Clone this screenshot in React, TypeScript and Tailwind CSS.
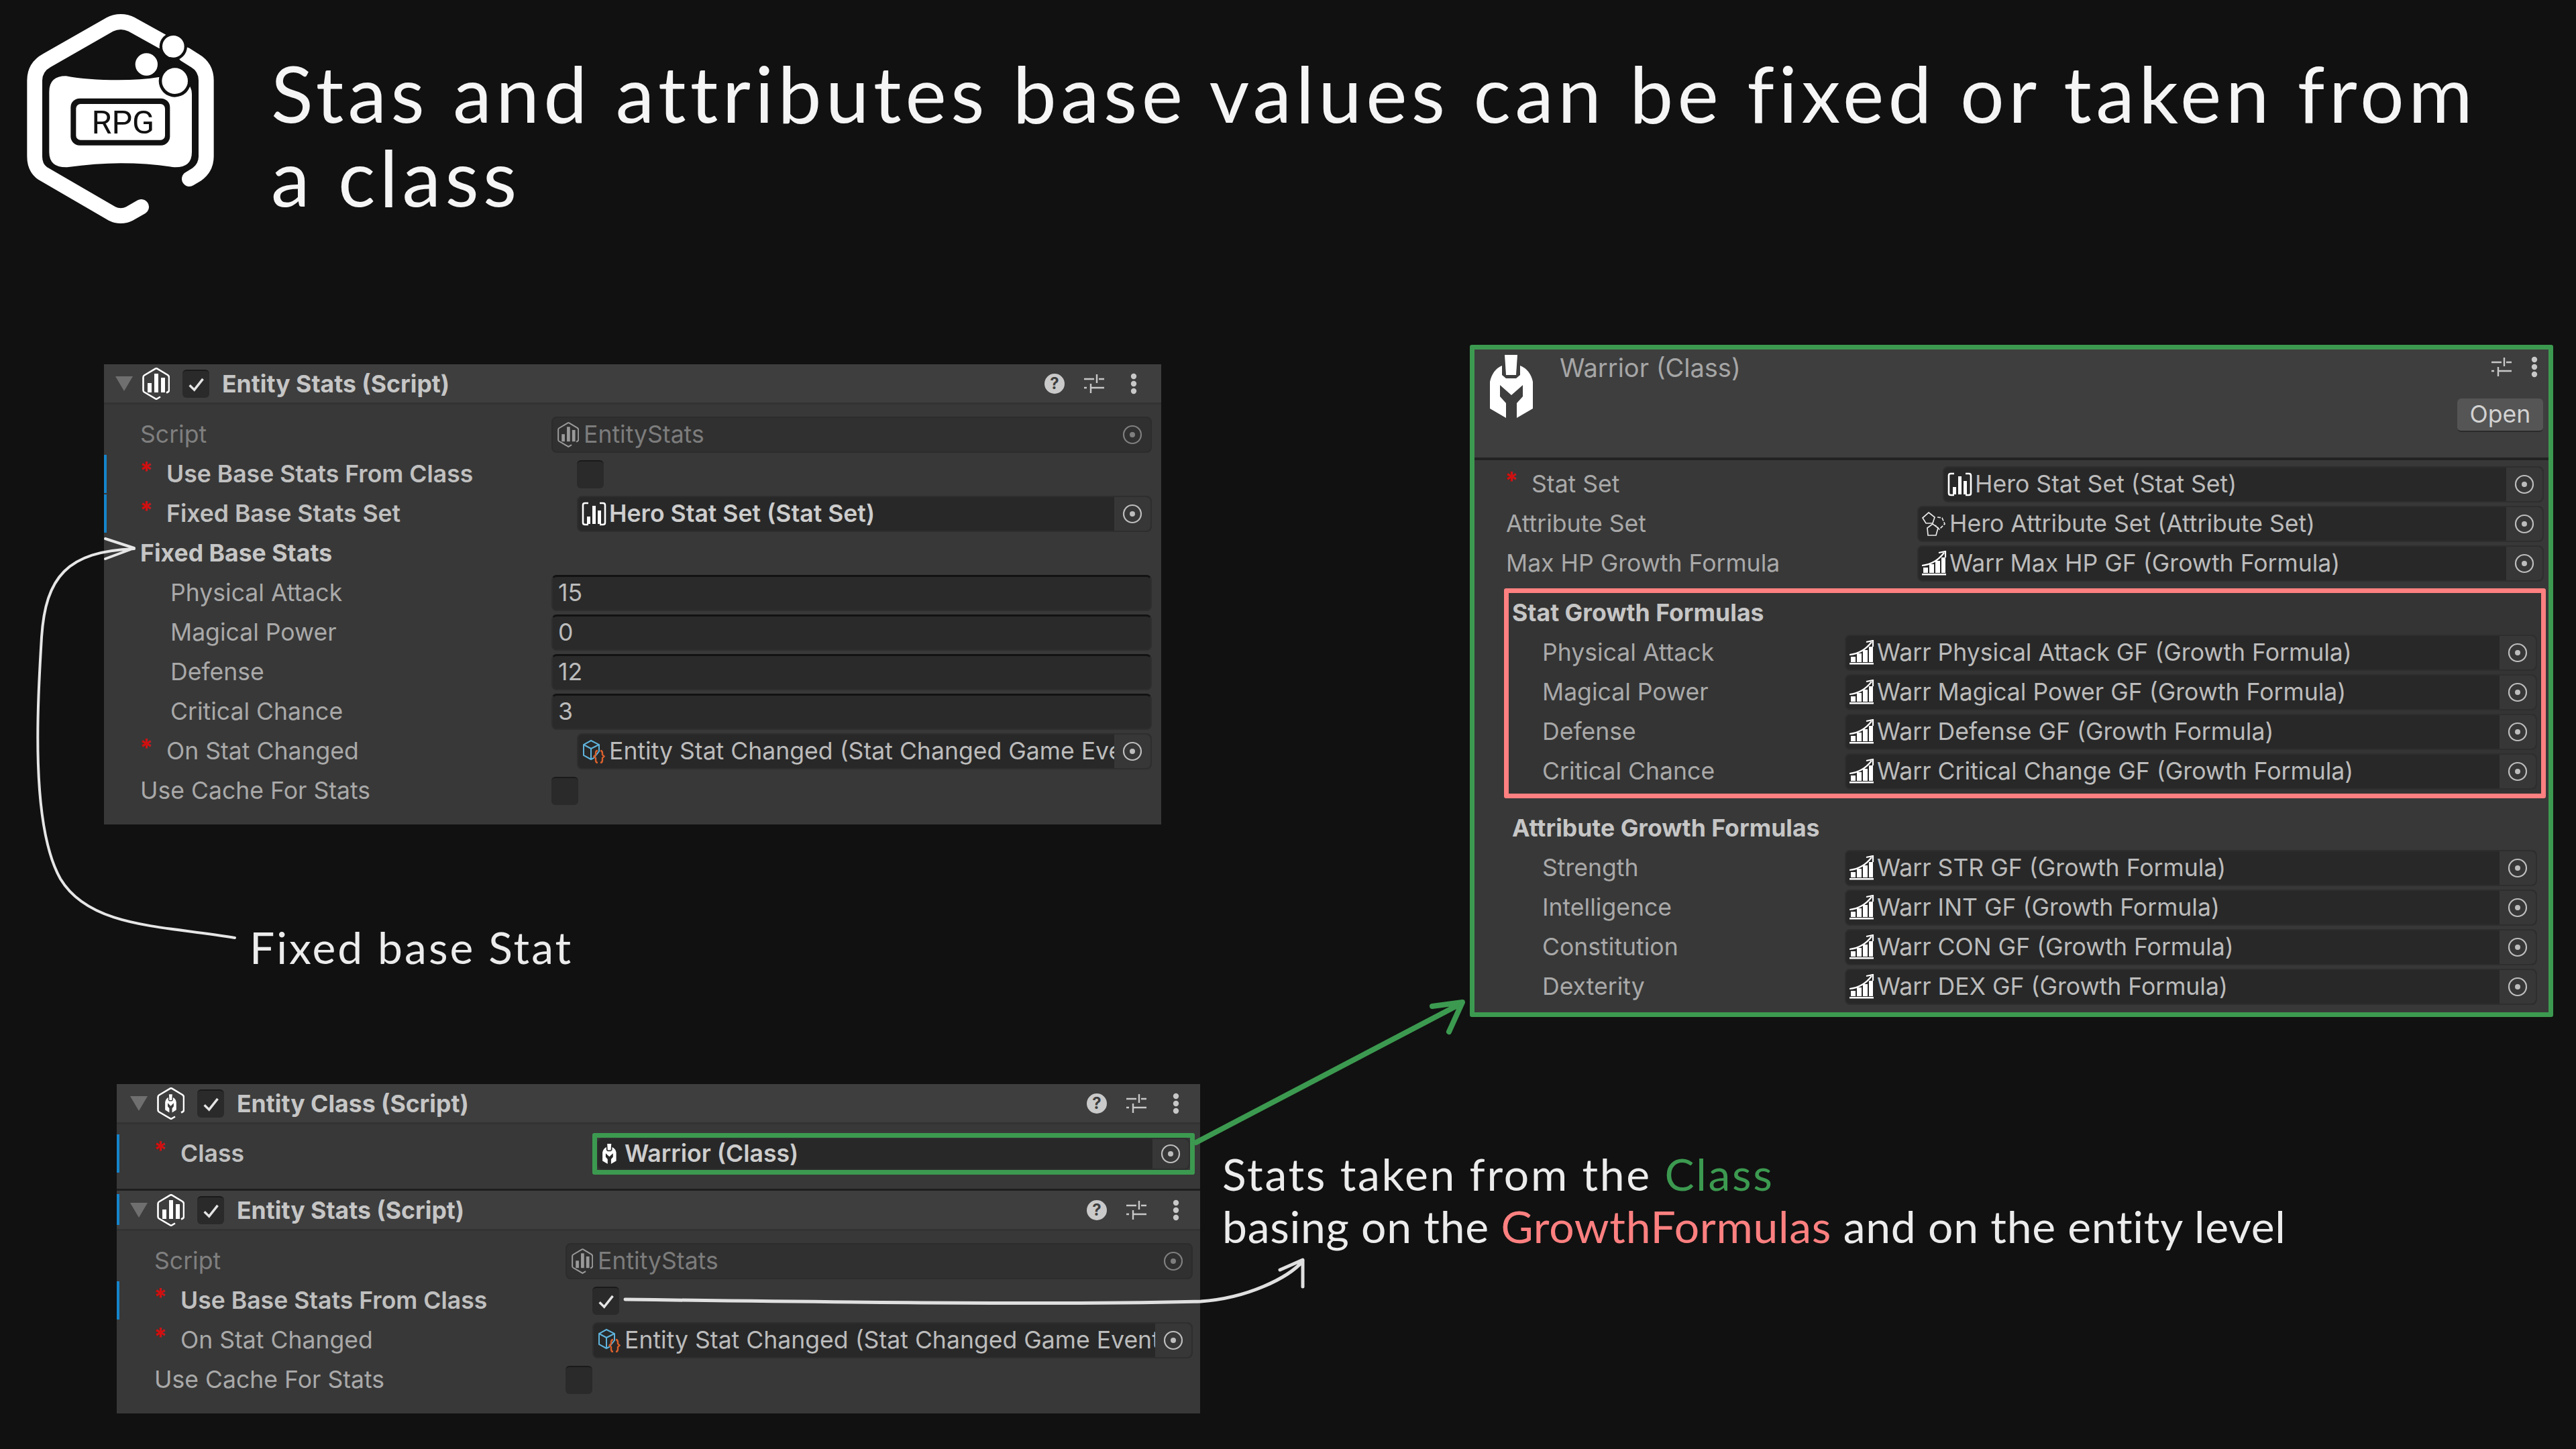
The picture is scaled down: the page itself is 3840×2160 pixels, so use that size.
import React from "react";

const HEX = "M27 43.5 L21 47 L3 36.5 Q1.5 35.5 1.5 33.5 V14.5 Q1.5 12.5 3 11.5 L20 1.5 Q21 1 22 1.5 L38 11 Q40 12.5 40 14.5 V33.5 Q40 35.5 38 36.5 L36 37.5";
const HELMET_BODY = "M34 24V38L40 43H55L61 38V24Q76 30 80 48V88L56 102V80L65 70V53L48 68L31 53V70L40 80V102L16 88V48Q20 30 34 24Z";
const HELMET_PLUME = "M38 8H57L55 38H40Z";

function Helmet({ className }: { className: string }) {
  return (
    <svg viewBox="0 0 100 110" className={className} fill="#fff">
      <path d={HELMET_PLUME} />
      <path d={HELMET_BODY} />
    </svg>
  );
}

function HexStats({ color = "#fff", className = "w-[41px] h-[48px]" }: { color?: string; className?: string }) {
  return (
    <svg viewBox="0 0 41 48" className={className + " shrink-0"} fill={color}>
      <path d={HEX} fill="none" stroke={color} strokeWidth="2.6" />
      <rect x="8" y="23" width="6" height="14" />
      <rect x="18" y="9" width="6" height="28" />
      <rect x="28" y="15" width="6" height="22" />
    </svg>
  );
}

function HexClass() {
  return (
    <svg viewBox="0 0 41 48" className="w-[41px] h-[48px] shrink-0" fill="#fff">
      <path d={HEX} fill="none" stroke="#fff" strokeWidth="2.6" />
      <g transform="translate(8 8) scale(0.26 0.29)">
        <path d={HELMET_PLUME} />
        <path d={HELMET_BODY} />
      </g>
    </svg>
  );
}

function StatSetIcon() {
  return (
    <svg viewBox="0 0 37 36" className="w-[37px] h-[36px] shrink-0" fill="#fff">
      <path d="M10 2H5Q2 2 2 5V31Q2 34 5 34H10M27 2H32Q35 2 35 5V31Q35 34 32 34H27" fill="none" stroke="#fff" strokeWidth="2.6" />
      <rect x="8" y="22" width="5" height="11" />
      <rect x="16" y="6" width="5" height="27" />
      <rect x="24" y="13" width="5" height="20" />
    </svg>
  );
}

function AttrIcon() {
  return (
    <svg viewBox="0 0 38 38" className="w-[38px] h-[38px] shrink-0" fill="none" stroke="#e8e8e8" strokeWidth="1.7">
      <path d="M11 2L20 9L17 18H7L2 10Z" />
      <path d="M24 9L31 10L35 19L27 27L21 21" strokeDasharray="5 2" />
      <path d="M9 25L17 19L25 25L22 36H10Z" />
    </svg>
  );
}

function GrowthIcon() {
  return (
    <svg viewBox="0 0 37 37" className="w-[37px] h-[37px] shrink-0" fill="#fff">
      <rect x="0" y="34" width="36" height="2.5" />
      <rect x="2" y="25" width="7" height="8" />
      <rect x="11" y="20" width="7" height="13" />
      <rect x="20" y="15" width="7" height="18" />
      <rect x="29" y="10" width="6" height="23" />
      <path d="M0 22Q20 20 33 3M25 3L35 1V10" fill="none" stroke="#fff" strokeWidth="2.2" />
    </svg>
  );
}

function EventIcon() {
  return (
    <svg viewBox="0 0 34 36" className="w-[34px] h-[36px] shrink-0" fill="none">
      <path d="M13 2L25 8V18L17 28L13 30L2 24V8ZM2 8L13 14L25 8M13 14V30" stroke="#5fb3dc" strokeWidth="2" />
      <path d="M23 17Q20 17 20 21V23L17.5 25.5L20 28V31Q20 35 23 35M27 17Q30 17 30 21V23L32.5 25.5L30 28V31Q30 35 27 35" stroke="#d9602c" strokeWidth="2.4" />
    </svg>
  );
}

function Picker({ dim }: { dim?: boolean }) {
  const c = dim ? "#7f7f7f" : "#bdbdbd";
  return (
    <div className={"h-full w-[54px] shrink-0 flex items-center justify-center rounded-r-[6px] " + (dim ? "bg-[#303030]" : "bg-[#373737]")}>
      <svg viewBox="0 0 30 30" className="w-[30px] h-[30px]">
        <circle cx="15" cy="15" r="13" fill="none" stroke={c} strokeWidth="2.2" />
        <circle cx="15" cy="15" r="4" fill={c} />
      </svg>
    </div>
  );
}

function Field({ icon, text, dim, bold, compact }: { icon?: React.ReactNode; text: string; dim?: boolean; bold?: boolean; compact?: boolean }) {
  return (
    <div className={"h-[54px] flex-1 min-w-0 flex items-center rounded-[8px] border-2 overflow-hidden " + (dim ? "bg-[#303030] border-[#2c2c2c]" : "bg-[#282828] border-[#2e2e2e]")}>
      <div className={(compact ? "ml-[1px] w-[32px]" : "ml-[4px] w-[38px]") + " shrink-0 flex justify-center"}>{icon}</div>
      <div className={"flex-1 min-w-0 overflow-hidden whitespace-nowrap leading-[46px] " + (compact ? "ml-[6px] " : "ml-[4px] ") + (dim ? "text-[#7c7c7c]" : bold ? "text-[#cdcdcd] font-semibold" : "text-[#bcbcbc]")}>{text}</div>
      <Picker dim={dim} />
    </div>
  );
}

function Num({ value }: { value: string }) {
  return (
    <div className="h-[54px] flex-1 flex items-center rounded-[8px] bg-[#2a2a2a] border-2 border-[#2e2e2e] border-t-[3px] border-t-[#121212] pl-[8px] text-[#bcbcbc]">
      {value}
    </div>
  );
}

function Check({ on, className = "" }: { on?: boolean; className?: string }) {
  return (
    <div className={"w-[40px] h-[42px] rounded-[6px] bg-[#2a2a2a] border-t-[2px] border-t-[#1a1a1a] flex items-center justify-center " + className}>
      {on && (
        <svg viewBox="0 0 24 24" className="w-[28px] h-[28px]" fill="none" stroke="#e4e4e4" strokeWidth="3">
          <path d="M4 13L10 19L21 5" />
        </svg>
      )}
    </div>
  );
}

function Row({ label, kind = "plain", star, blue, labelClass, children }: {
  label: string;
  kind?: "plain" | "bold" | "dim" | "semi";
  star?: boolean;
  blue?: boolean;
  labelClass: string;
  children?: React.ReactNode;
}) {
  const color = kind === "dim" ? "text-[#7f7f7f]" : kind === "bold" ? "text-[#c6c6c6] font-bold" : kind === "semi" ? "text-[#c0c0c0] font-semibold" : "text-[#a9a9a9]";
  return (
    <div className="relative h-[59px] flex items-center">
      {blue && <div className="absolute left-0 top-[1px] bottom-[1px] w-[4px] bg-[#1585cc]" />}
      <div className={"shrink-0 whitespace-nowrap " + labelClass + " " + color}>
        <span className="relative">
          {star && <span className="absolute left-[-40px] top-[-3px] text-[#d10f0f] font-bold">*</span>}
          {label}
        </span>
      </div>
      {children}
    </div>
  );
}

function Sliders() {
  return (
    <svg viewBox="0 0 32 32" className="w-[32px] h-[32px]" fill="none" stroke="#c8c8c8" strokeWidth="2.4">
      <path d="M1 9H16M23 9H31M20 2V15M1 22H5M11 22H31M11 16V30" />
    </svg>
  );
}

function Dots() {
  return (
    <svg viewBox="0 0 10 32" className="w-[10px] h-[32px]" fill="#c8c8c8">
      <circle cx="5" cy="5" r="4.2" />
      <circle cx="5" cy="16" r="4.2" />
      <circle cx="5" cy="27" r="4.2" />
    </svg>
  );
}

function Header({ icon, title, blue, lower }: { icon: React.ReactNode; title: string; blue?: boolean; lower?: boolean }) {
  return (
    <div className="relative h-[60px] flex items-center bg-[#3e3e3e] border-b-[3px] border-[#333333]">
      {blue && <div className="absolute left-0 top-[5px] bottom-[6px] w-[4px] bg-[#1585cc]" />}
      <div className={(lower ? "ml-[20px]" : "ml-[17px]") + " w-0 h-0 border-x-[13px] border-x-transparent border-t-[22px] border-t-[#6f6f6f]"} />
      <div className="ml-[14px] flex">{icon}</div>
      <Check on className="ml-[19px]" />
      <div className="ml-[19px] mt-[3px] text-[#c6c6c6] font-bold whitespace-nowrap">{title}</div>
      <div className={"ml-auto flex items-center " + (lower ? "mr-[31px]" : "mr-[36px]")}>
        <div className="w-[30px] h-[30px] rounded-full bg-[#cacaca] text-[#3e3e3e] font-bold text-[24px] leading-[30px] text-center">?</div>
        <div className="ml-[28px]"><Sliders /></div>
        <div className="ml-[38px]"><Dots /></div>
      </div>
    </div>
  );
}

function Logo() {
  return (
    <svg viewBox="0 0 960 1020" className="w-[320px] h-[340px] shrink-0" fill="#fff">
      <path d="M572 925L520 955Q480 975 440 955L130 775Q95 750 95 700V360Q95 300 150 270L430 110Q480 85 530 110L665 185" fill="none" stroke="#fff" strokeWidth="68" strokeLinecap="round" />
      <path d="M770 245L810 270Q862 300 862 360V700Q862 750 820 780L787 800" fill="none" stroke="#fff" strokeWidth="68" strokeLinecap="round" />
      <path d="M235 340Q330 358 470 358Q570 358 650 345Q798 340 798 420V680Q798 750 720 748Q600 730 480 730Q370 730 240 748Q160 750 160 680V410Q160 340 235 340Z" />
      <circle cx="595" cy="288" r="62" fill="#111111" />
      <circle cx="595" cy="288" r="50" />
      <circle cx="715" cy="208" r="62" fill="#111111" />
      <circle cx="715" cy="208" r="49" />
      <circle cx="722" cy="362" r="72" fill="#111111" />
      <circle cx="722" cy="362" r="58" />
      <rect x="256" y="440" width="444" height="210" rx="40" fill="#111111" />
      <rect x="280" y="465" width="398" height="161" rx="20" />
      <text x="490" y="598" textAnchor="middle" fill="#111111" fontSize="146" fontFamily="Roboto, sans-serif">RPG</text>
    </svg>
  );
}

const LABEL_A = "w-[667px] pl-[54px]";
const LABEL_STAR = "w-[705px] pl-[93px]";
const LABEL_SUB = "w-[667px] pl-[99px]";
const LOW_A = "w-[669px] pl-[56px]";
const LOW_STAR = "w-[709px] pl-[95px]";

function StatsPanelTop() {
  return (
    <div className="w-[1576px] h-[686px] bg-[#383838]">
      <Header icon={<HexStats />} title="Entity Stats (Script)" />
      <div className="pt-[15px] pr-[14px]">
        <Row label="Script" kind="dim" labelClass={LABEL_A}><Field dim icon={<HexStats color="#9a9a9a" className="w-[32px] h-[38px]" />} text="EntityStats" /></Row>
        <Row label="Use Base Stats From Class" kind="semi" star blue labelClass={LABEL_STAR}><Check /></Row>
        <Row label="Fixed Base Stats Set" kind="semi" star blue labelClass={LABEL_STAR}><Field bold icon={<StatSetIcon />} text="Hero Stat Set (Stat Set)" /></Row>
        <Row label="Fixed Base Stats" kind="bold" labelClass={LABEL_A} />
        <Row label="Physical Attack" labelClass={LABEL_SUB}><Num value="15" /></Row>
        <Row label="Magical Power" labelClass={LABEL_SUB}><Num value="0" /></Row>
        <Row label="Defense" labelClass={LABEL_SUB}><Num value="12" /></Row>
        <Row label="Critical Chance" labelClass={LABEL_SUB}><Num value="3" /></Row>
        <Row label="On Stat Changed" star labelClass={LABEL_STAR}><Field icon={<EventIcon />} text="Entity Stat Changed (Stat Changed Game Event)" /></Row>
        <Row label="Use Cache For Stats" labelClass={LABEL_A}><Check /></Row>
      </div>
    </div>
  );
}

function BottomPanels() {
  return (
    <div className="w-[1615px] h-[491px] bg-[#383838]">
      <Header lower icon={<HexClass />} title="Entity Class (Script)" />
      <div className="h-[99px] pt-[14px] pr-[8px] border-b-[3px] border-[#1e1e1e]">
        <Row label="Class" kind="semi" star blue labelClass={LOW_STAR}>
          <div className="flex-1 min-w-0 flex border-[7px] border-[#3c9a50] rounded-[3px] [&>div]:h-[48px]">
            <Field compact bold icon={<Helmet className="w-[36px] h-[40px]" />} text="Warrior (Class)" />
          </div>
        </Row>
      </div>
      <Header lower icon={<HexStats />} title="Entity Stats (Script)" blue />
      <div className="pt-[15px] pr-[11px]">
        <Row label="Script" kind="dim" labelClass={LOW_A}><Field dim icon={<HexStats color="#9a9a9a" className="w-[32px] h-[38px]" />} text="EntityStats" /></Row>
        <Row label="Use Base Stats From Class" kind="semi" star blue labelClass={LOW_STAR}><Check on /></Row>
        <Row label="On Stat Changed" star labelClass={LOW_STAR}><Field icon={<EventIcon />} text="Entity Stat Changed (Stat Changed Game Event)" /></Row>
        <Row label="Use Cache For Stats" labelClass={LOW_A}><Check /></Row>
      </div>
    </div>
  );
}

const W_TOP = "w-[660px]";

function FormulaRow({ label, text }: { label: string; text: string }) {
  return (
    <Row label={label} labelClass="w-[501px] pl-[50px]">
      <Field icon={<GrowthIcon />} text={text} />
    </Row>
  );
}

function WarriorPanel() {
  return (
    <div className="w-[1615px] h-[1002px] border-[7px] border-[#3c9a50] bg-[#383838] rounded-[3px]">
      <div className="h-[165px] bg-[#3e3e3e] border-b-[4px] border-[#222222] flex items-start">
        <Helmet className="w-[100px] h-[110px] ml-[7px] shrink-0" />
        <div className="ml-[20px] mt-[7px] text-[38px] text-[#a6a6a6] whitespace-nowrap">Warrior (Class)</div>
        <div className="ml-auto mr-[8px] flex flex-col items-end">
          <div className="flex items-center mt-[10px] mr-[8px]">
            <Sliders />
            <div className="ml-[28px]"><Dots /></div>
          </div>
          <div className="mt-[31px] w-[128px] h-[50px] rounded-[6px] bg-[#555555] border-b-[2px] border-[#2a2a2a] text-[#d2d2d2] flex items-center justify-center">Open</div>
        </div>
      </div>
      <div className="pt-[6px]">
        <div className="pr-[7px]">
          <Row label="Stat Set" star labelClass="w-[698px] pl-[85px]"><Field icon={<StatSetIcon />} text="Hero Stat Set (Stat Set)" /></Row>
          <Row label="Attribute Set" labelClass={W_TOP + " pl-[47px]"}><Field icon={<AttrIcon />} text="Hero Attribute Set (Attribute Set)" /></Row>
          <Row label="Max HP Growth Formula" labelClass={W_TOP + " pl-[47px]"}><Field icon={<GrowthIcon />} text="Warr Max HP GF (Growth Formula)" /></Row>
        </div>
        <div className="mt-[8px] ml-[44px] mr-[4px] h-[313px] border-[7px] border-[#ff8080] rounded-[3px] bg-[#343434] pr-[6px]">
          <Row label="Stat Growth Formulas" kind="bold" labelClass="pl-[5px]" />
          <FormulaRow label="Physical Attack" text="Warr Physical Attack GF (Growth Formula)" />
          <FormulaRow label="Magical Power" text="Warr Magical Power GF (Growth Formula)" />
          <FormulaRow label="Defense" text="Warr Defense GF (Growth Formula)" />
          <FormulaRow label="Critical Chance" text="Warr Critical Change GF (Growth Formula)" />
        </div>
        <div className="mt-[15px] ml-[51px] mr-[11px] pr-[6px]">
          <Row label="Attribute Growth Formulas" kind="bold" labelClass="pl-[5px]" />
          <FormulaRow label="Strength" text="Warr STR GF (Growth Formula)" />
          <FormulaRow label="Intelligence" text="Warr INT GF (Growth Formula)" />
          <FormulaRow label="Constitution" text="Warr CON GF (Growth Formula)" />
          <FormulaRow label="Dexterity" text="Warr DEX GF (Growth Formula)" />
        </div>
      </div>
    </div>
  );
}

function Annotations() {
  return (
    <svg viewBox="0 0 3840 2160" className="absolute inset-0 w-[3840px] h-[2160px] pointer-events-none" fill="none" strokeLinecap="round" strokeLinejoin="round">
      <path d="M350 1398C250 1380 135 1385 90 1310C45 1230 56 1050 62 950C68 860 100 822 200 818M157 803L200 817L157 833" stroke="#e6e6e6" strokeWidth="4" />
      <path d="M932 1937C1300 1942 1600 1945 1790 1940C1860 1935 1920 1905 1942 1880M1908 1893L1942 1878L1942 1918" stroke="#e0e0e0" strokeWidth="5" />
      <path d="M1783 1703L2178 1496M2135 1500L2180 1494L2160 1538" stroke="#3c9a50" strokeWidth="8" />
    </svg>
  );
}

export default function App() {
  return (
    <div className="relative w-[3840px] h-[2160px] overflow-hidden bg-[#111111] [font-family:Inter,sans-serif] text-[35.6px] leading-[40px]">
      <header className="h-[514px] flex items-start pl-[20px]">
        <Logo />
        <h1 className="ml-[64px] mt-[76px] w-[3330px] [font-family:Lato,sans-serif] text-[116px] leading-[125px] tracking-[6.35px] text-[#f5f5f5] font-normal">
          Stas and attributes base values can be fixed or taken from a class
        </h1>
      </header>
      <div className="h-[1102px] flex items-start">
        <div className="pl-[155px] pt-[29px]">
          <StatsPanelTop />
          <p className="ml-[217px] mt-[143px] [font-family:Lato,sans-serif] text-[66px] leading-[80px] tracking-[3px] text-[#ececec]">Fixed base Stat</p>
        </div>
        <div className="ml-auto mr-[34px]"><WarriorPanel /></div>
      </div>
      <div className="flex items-start pl-[174px]">
        <BottomPanels />
        <div className="ml-[33px] pt-[95px] [font-family:Lato,sans-serif] text-[66px] leading-[78px] text-[#ececec] whitespace-nowrap">
          <p className="tracking-[2.7px]">Stats taken from the <span className="text-[#3c9a50]">Class</span></p>
          <p className="tracking-[0.7px]">basing on the <span className="text-[#ff8080]">GrowthFormulas</span> and on the entity level</p>
        </div>
      </div>
      <Annotations />
    </div>
  );
}
